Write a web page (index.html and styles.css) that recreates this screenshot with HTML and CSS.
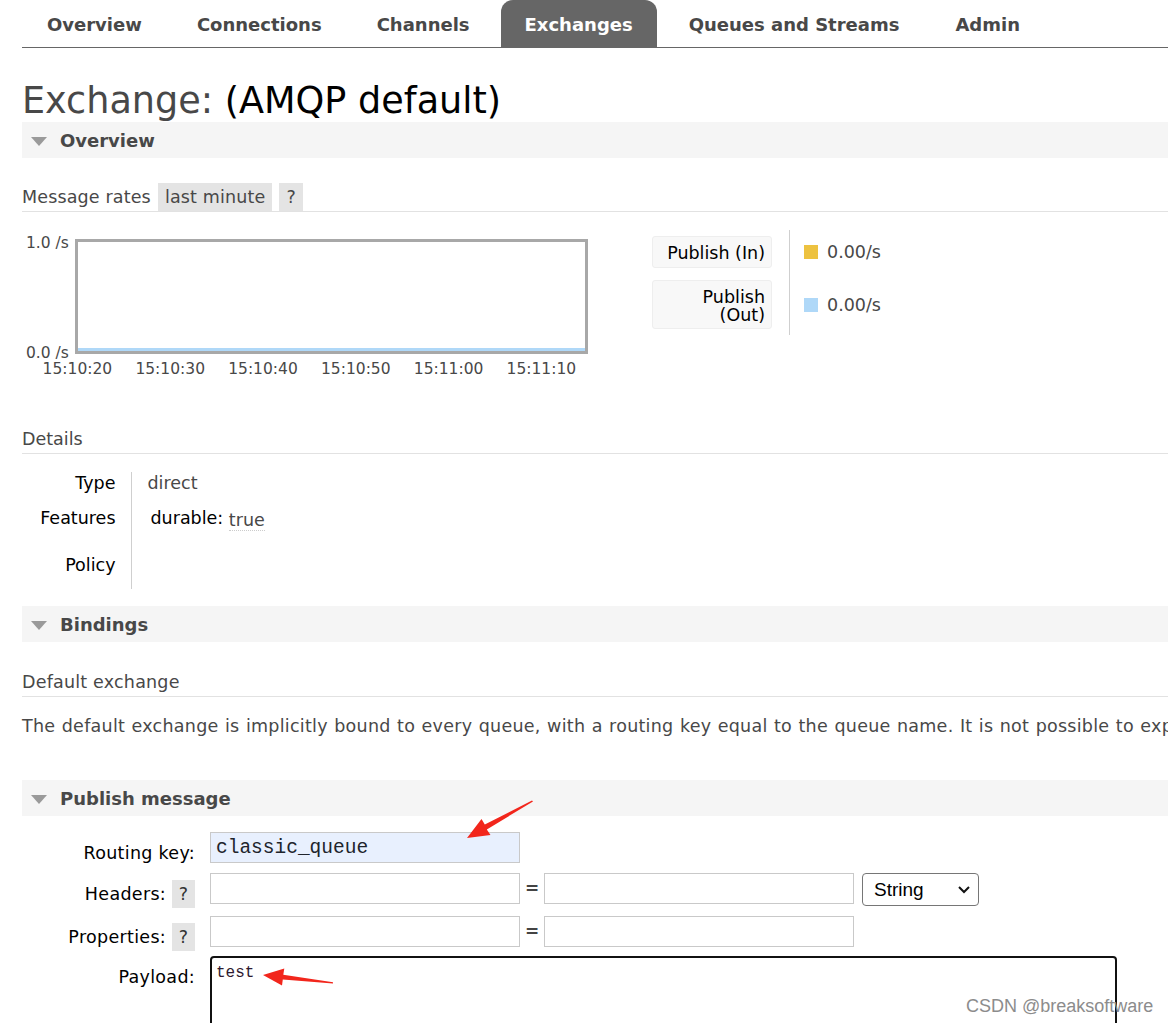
FILE: index.html
```html
<!DOCTYPE html>
<html lang="en">
<head>
<meta charset="utf-8">
<title>RabbitMQ Management - Exchange: (AMQP default)</title>
<link rel="stylesheet" href="styles.css">
</head>
<body>
<div class="page">
  <nav class="tabs">
    <a class="tab">Overview</a>
    <a class="tab">Connections</a>
    <a class="tab">Channels</a>
    <a class="tab tab-active">Exchanges</a>
    <a class="tab">Queues and Streams</a>
    <a class="tab">Admin</a>
  </nav>

  <main class="main">
    <h1 class="title"><span class="title-label">Exchange:</span> <span class="title-name">(AMQP default)</span></h1>

    <section class="section">
      <h2 class="section-head"><span class="tri"></span>Overview</h2>
      <div class="section-body">
        <h3 class="sub sub-rates">Message rates <span class="pill">last minute</span><span class="pill">?</span></h3>
        <div class="rates">
          <div class="chart">
            <span class="ylabel ylabel-top">1.0 /s</span>
            <span class="ylabel ylabel-bottom">0.0 /s</span>
            <div class="plot"><div class="plot-line"></div></div>
            <div class="xlabels">
              <span>15:10:20</span><span>15:10:30</span><span>15:10:40</span><span>15:10:50</span><span>15:11:00</span><span>15:11:10</span>
            </div>
          </div>
          <table class="legend">
            <tr class="legend-row-in">
              <th><div class="legend-box">Publish (In)</div></th>
              <td><span class="swatch swatch-yellow"></span>0.00/s</td>
            </tr>
            <tr class="legend-row-out">
              <th><div class="legend-box">Publish<br>(Out)</div></th>
              <td><span class="swatch swatch-blue"></span>0.00/s</td>
            </tr>
          </table>
        </div>

        <h3 class="sub sub-details">Details</h3>
        <table class="facts">
          <tr class="facts-type"><th>Type</th><td class="muted">direct</td></tr>
          <tr class="facts-features"><th>Features</th><td><span class="feat-key">durable:</span> <span class="feat-val">true</span></td></tr>
          <tr class="facts-policy"><th>Policy</th><td></td></tr>
        </table>
      </div>
    </section>

    <section class="section section-bindings">
      <h2 class="section-head"><span class="tri"></span>Bindings</h2>
      <div class="section-body">
        <h3 class="sub sub-default">Default exchange</h3>
        <p class="note">The default exchange is implicitly bound to every queue, with a routing key equal to the queue name. It is not possible to explicitly bind to, or unbind from the default exchange. It also cannot be deleted.</p>
      </div>
    </section>

    <section class="section section-publish">
      <h2 class="section-head"><span class="tri"></span>Publish message</h2>
      <form class="pub-form">
        <div class="form-row row-routing">
          <label class="form-label">Routing key:</label>
          <div class="form-field"><input class="text-input text-input-filled" type="text" value="classic_queue"></div>
        </div>
        <div class="form-row row-headers">
          <label class="form-label">Headers: <span class="help">?</span></label>
          <div class="form-field">
            <input class="text-input" type="text">
            <span class="eq">=</span>
            <input class="text-input" type="text">
            <div class="select"><span>String</span>
              <svg class="chev" width="14" height="10" viewBox="0 0 14 10"><path d="M2 2 L7 7 L12 2" fill="none" stroke="#111" stroke-width="2"/></svg>
            </div>
          </div>
        </div>
        <div class="form-row row-props">
          <label class="form-label">Properties: <span class="help">?</span></label>
          <div class="form-field">
            <input class="text-input" type="text">
            <span class="eq">=</span>
            <input class="text-input" type="text">
          </div>
        </div>
        <div class="form-row row-payload">
          <label class="form-label">Payload:</label>
          <div class="form-field"><div class="payload">test</div></div>
        </div>
      </form>
    </section>
  </main>

  <svg class="annot" width="1168" height="1023" viewBox="0 0 1168 1023">
    <polygon points="467,838 490.5,835 486.8,829.4 533,801.5 532,800.5 484.8,824.6 481.5,819" fill="#f2261c"/>
    <polygon points="263,975 282,985.5 282.8,979.6 333,983.5 333,982.2 283.3,974.8 284.3,968.5" fill="#f2261c"/>
  </svg>
  <div class="watermark">CSDN @breaksoftware</div>
</div>
</body>
</html>
```

FILE: styles.css
```css
* { box-sizing: border-box; }

html, body {
  margin: 0;
  padding: 0;
  background: #fff;
}

body {
  font-family: "DejaVu Sans", Verdana, sans-serif;
  font-size: 17.5px;
  color: #484848;
  overflow: hidden;
}

.page {
  position: relative;
  width: 1168px;
  height: 1023px;
  overflow: hidden;
}

/* ---------- tabs ---------- */
.tabs {
  display: flex;
  gap: 7px;
  margin-left: 22px;
  padding-left: 1px;
  height: 48px;
  border-bottom: 1px solid #666;
}

.tab {
  display: block;
  height: 47px;
  line-height: 49px;
  padding: 0 24px;
  font-size: 18px;
  font-weight: bold;
  color: #484848;
  white-space: nowrap;
}

.tab:nth-child(n+5) { margin-left: 1px; }

.tab-active {
  background: #666;
  color: #fff;
  border-radius: 12px 12px 0 0;
}

/* ---------- main ---------- */
.main {
  margin-left: 22px;
}

.title {
  margin: 33px 0 0 0;
  height: 41px;
  line-height: 40px;
  font-size: 36.6px;
  font-weight: normal;
  white-space: nowrap;
}

.title-label { color: #484848; }
.title-name { color: #000; }

.section-head {
  display: flex;
  align-items: center;
  height: 36px;
  margin: 0;
  padding-left: 9px;
  padding-top: 1px;
  background: #f5f5f5;
  font-size: 18px;
  font-weight: bold;
  color: #484848;
  width: 1400px;
}

.tri {
  display: inline-block;
  width: 0;
  height: 0;
  border-left: 8px solid transparent;
  border-right: 8px solid transparent;
  border-top: 9px solid #9a9a9a;
  margin-right: 13px;
  margin-top: 1px;
}

.sub {
  margin: 0;
  font-size: 17.5px;
  font-weight: normal;
  color: #484848;
  border-bottom: 1px solid #e2e2e2;
  line-height: 22px;
  width: 1400px;
}

.sub-rates {
  display: flex;
  align-items: center;
  margin-top: 25px;
  height: 29px;
  letter-spacing: 0.15px;
}

.pill {
  display: inline-block;
  height: 28px;
  line-height: 28px;
  padding: 0 7px;
  background: #e4e4e4;
  margin-left: 7px;
  align-self: flex-start;
}

/* ---------- chart ---------- */
.rates {
  display: flex;
  margin-top: 18px;
}

.chart {
  position: relative;
  width: 590px;
  height: 150px;
  font-size: 15.5px;
  color: #484848;
}

.ylabel {
  position: absolute;
  left: 4px;
  line-height: 18px;
}
.ylabel-top { top: 4px; }
.ylabel-bottom { top: 114px; }

.plot {
  position: absolute;
  left: 53px;
  top: 9px;
  width: 513px;
  height: 115px;
  border: 3px solid #a8a8a8;
  display: flex;
  align-items: flex-end;
}

.plot-line {
  width: 100%;
  height: 3px;
  background: #afd8f8;
}

.xlabels {
  position: absolute;
  left: 9px;
  top: 130px;
  display: flex;
  line-height: 18px;
}

.xlabels span {
  width: 92.8px;
  text-align: center;
}

/* ---------- legend ---------- */
.legend {
  border-collapse: collapse;
  margin-left: 40px;
  align-self: flex-start;
}

.legend th {
  padding: 6px 17px 6px 0;
  font-weight: normal;
  vertical-align: top;
}

.legend td {
  border-left: 1px solid #cfcfcf;
  padding: 0 0 0 14px;
  vertical-align: middle;
  white-space: nowrap;
  color: #484848;
}

.legend-box {
  width: 120px;
  text-align: right;
  color: #000;
  background: #f8f8f8;
  border: 1px solid #eee;
  border-radius: 3px;
  padding: 7px 6px 6px 6px;
  line-height: 18px;
}

.legend-row-in .legend-box { height: 32px; }
.legend-row-out .legend-box { height: 49px; }
.legend-row-out th { padding-bottom: 6px; }

.swatch {
  display: inline-block;
  width: 14px;
  height: 14px;
  margin-right: 9px;
  vertical-align: -1px;
}
.swatch-yellow { background: #edc240; }
.swatch-blue { background: #afd8f8; }

/* ---------- details ---------- */
.sub-details {
  margin-top: 48px;
  padding-bottom: 3px;
}

.facts {
  border-collapse: collapse;
  margin-top: 18px;
}

.facts th {
  width: 109px;
  text-align: right;
  font-weight: normal;
  color: #000;
  padding: 0 15px 0 0;
  vertical-align: top;
  line-height: 22px;
  white-space: nowrap;
}

.facts td {
  border-left: 1px solid #cfcfcf;
  padding: 0 0 0 16px;
  vertical-align: top;
  line-height: 22px;
  white-space: nowrap;
}

.facts-type th, .facts-type td { height: 32px; padding-top: 0; }
.facts-features th, .facts-features td { height: 40px; padding-top: 3px; }
.facts-policy th, .facts-policy td { height: 45px; padding-top: 10px; }

.muted { color: #484848; }
.feat-key { color: #000; margin-left: 3px; }
.feat-val {
  color: #484848;
  border-bottom: 1px dotted #ccc;
  position: relative;
  top: 2px;
}

/* ---------- bindings ---------- */
.section-bindings { margin-top: 17px; }

.sub-default {
  margin-top: 29px;
  padding-bottom: 3px;
  letter-spacing: 0.2px;
}

.note {
  margin: 18px 0 0 0;
  line-height: 22px;
  white-space: nowrap;
  color: #484848;
  letter-spacing: 0.26px;
  word-spacing: 0.6px;
}

/* ---------- publish ---------- */
.section-publish { margin-top: 43px; }

.pub-form {
  margin-top: 16px;
  display: flex;
  flex-direction: column;
}

.form-row {
  display: flex;
  align-items: flex-start;
}

.row-routing { margin-bottom: 7px; }
.row-headers { margin-bottom: 9px; }
.row-props { margin-bottom: 5px; }

.form-label {
  width: 188px;
  padding-right: 15px;
  padding-top: 7px;
  height: 35px;
  display: flex;
  align-items: center;
  justify-content: flex-end;
  gap: 6px;
  color: #000;
  white-space: nowrap;
  letter-spacing: 0.3px;
}

.row-routing .form-label,
.row-headers .form-label { height: 34px; padding-top: 7px; }

.help {
  display: inline-block;
  width: 23px;
  height: 28px;
  line-height: 28px;
  text-align: center;
  background: #e4e4e4;
  color: #333;
  letter-spacing: 0;
}

.form-field {
  display: flex;
  align-items: flex-start;
}

.text-input {
  width: 310px;
  height: 31px;
  border: 1px solid #c9c9c9;
  background: #fff;
  margin: 0;
  padding: 0 5px;
  font-family: "Liberation Mono", "Courier New", monospace;
  font-size: 19.5px;
  color: #222;
  outline: none;
}

.text-input-filled {
  background: #e8f0fe;
  color: #20242c;
}

.eq {
  width: 24px;
  text-align: center;
  line-height: 31px;
  font-weight: bold;
  color: #444;
  font-size: 17px;
}

.select {
  display: flex;
  align-items: center;
  justify-content: space-between;
  width: 117px;
  height: 33px;
  margin-left: 8px;
  padding: 0 7px 0 11px;
  border: 1px solid #767676;
  border-radius: 4px;
  font-family: "Liberation Sans", Arial, sans-serif;
  font-size: 19px;
  color: #000;
}

.payload {
  width: 907px;
  height: 120px;
  border: 2px solid #111;
  border-radius: 4px;
  padding: 6px 4px;
  font-family: "Liberation Mono", "Courier New", monospace;
  font-size: 16px;
  line-height: 18px;
  color: #2e1a30;
}

/* ---------- overlays ---------- */
.annot {
  position: absolute;
  left: 0;
  top: 0;
  pointer-events: none;
}

.watermark {
  position: absolute;
  left: 966px;
  top: 996px;
  font-family: "Liberation Sans", Arial, sans-serif;
  font-size: 18px;
  color: #8c8c8c;
  white-space: nowrap;
}
```
